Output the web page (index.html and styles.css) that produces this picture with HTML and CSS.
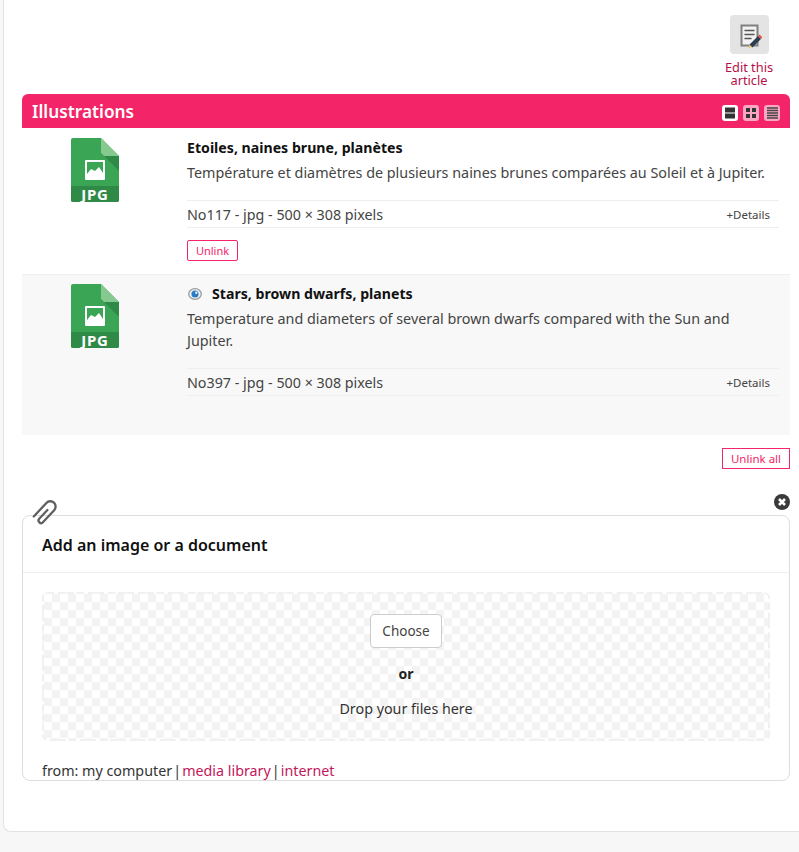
FILE: index.html
```html
<!DOCTYPE html>
<html lang="en">
<head>
<meta charset="utf-8">
<title>Illustrations</title>
<link rel="stylesheet" href="styles.css">
</head>
<body>
<main class="panel">
  <div class="edit-bar">
    <a class="edit-link">
      <span class="edit-icon">
        <svg width="26" height="26" viewBox="0 0 26 26">
          <rect x="5.500" y="3.500" width="16" height="20" fill="#f2f2f2" stroke="#808080" stroke-width="2"/>
          <path d="M8.500 8.500h10M8.500 12.500h10M8.500 16.500h7" stroke="#555" stroke-width="1.500"/>
          <path d="M15 24l8.500-8.500" stroke="#2c3e50" stroke-width="4"/>
          <path d="M23.500 15.500l1.500-1.500" stroke="#e2503f" stroke-width="4"/>
          <path d="M12.500 26l.8-3.600 2.800 2.800z" fill="#e8c56c"/>
        </svg>
      </span>
      <span class="edit-text">Edit this article</span>
    </a>
  </div>

  <section class="illustrations">
    <header class="ill-head">
      <h2 class="ill-title">Illustrations</h2>
      <div class="view-switch">
        <span class="view-btn view-on">
          <svg width="10" height="12" viewBox="0 0 10 12"><rect x="0" y="0.500" width="10" height="5" fill="#333"/><rect x="0" y="6.500" width="10" height="5" fill="#333"/></svg>
        </span>
        <span class="view-btn">
          <svg width="10" height="10" viewBox="0 0 10 10"><rect x="0" y="0" width="4" height="4" fill="#333"/><rect x="6" y="0" width="4" height="4" fill="#333"/><rect x="0" y="6" width="4" height="4" fill="#333"/><rect x="6" y="6" width="4" height="4" fill="#333"/></svg>
        </span>
        <span class="view-btn">
          <svg width="11" height="12" viewBox="0 0 11 12"><path d="M0 1h11M0 3.500h11M0 6h11M0 8.500h11M0 11h11" stroke="#444" stroke-width="1.300"/></svg>
        </span>
      </div>
    </header>

    <article class="item">
      <div class="item-icon">
        <svg class="jpg-icon" width="48" height="64" viewBox="0 0 48 64">
          <path d="M2 0h28l18 18v44a2 2 0 0 1-2 2H2a2 2 0 0 1-2-2V2a2 2 0 0 1 2-2z" fill="#3aa655"/>
          <path d="M30 0l18 18H33a3 3 0 0 1-3-3z" fill="#85c98f"/>
          <path d="M30 15l18 18V18H33a3 3 0 0 1-3-3z" fill="#2f8a47"/>
          <path d="M0 48h48v14a2 2 0 0 1-2 2H2a2 2 0 0 1-2-2z" fill="#2f8a47"/>
          <rect x="14" y="22" width="20" height="20" rx="1" fill="#fff"/>
          <path d="M16 24h16v11l-4-6-4 4-4-2-4 5z" fill="#3aa655"/>
          <text class="jpg-label" x="24" y="62" text-anchor="middle">JPG</text>
        </svg>
      </div>
      <div class="item-body">
        <h3 class="item-title">Etoiles, naines brune, planètes</h3>
        <p class="item-desc">Température et diamètres de plusieurs naines brunes comparées au Soleil et à Jupiter.</p>
        <div class="item-meta"><span>No117 - jpg - 500 × 308 pixels</span><span class="details">+Details</span></div>
        <button class="btn-unlink" type="button">Unlink</button>
      </div>
    </article>

    <article class="item item-alt">
      <div class="item-icon">
        <svg class="jpg-icon" width="48" height="64" viewBox="0 0 48 64">
          <path d="M2 0h28l18 18v44a2 2 0 0 1-2 2H2a2 2 0 0 1-2-2V2a2 2 0 0 1 2-2z" fill="#3aa655"/>
          <path d="M30 0l18 18H33a3 3 0 0 1-3-3z" fill="#85c98f"/>
          <path d="M30 15l18 18V18H33a3 3 0 0 1-3-3z" fill="#2f8a47"/>
          <path d="M0 48h48v14a2 2 0 0 1-2 2H2a2 2 0 0 1-2-2z" fill="#2f8a47"/>
          <rect x="14" y="22" width="20" height="20" rx="1" fill="#fff"/>
          <path d="M16 24h16v11l-4-6-4 4-4-2-4 5z" fill="#3aa655"/>
          <text class="jpg-label" x="24" y="62" text-anchor="middle">JPG</text>
        </svg>
      </div>
      <div class="item-body">
        <h3 class="item-title">
          <svg class="eye" width="16" height="14" viewBox="0 0 16 14"><ellipse cx="8" cy="7" rx="6.300" ry="5.300" fill="#eef3f7" stroke="#999" stroke-width="1.300"/><circle cx="8" cy="7" r="3.600" fill="#2c7cc4"/><circle cx="9.300" cy="5.800" r="1.200" fill="#e4f0fa"/></svg>
          <span>Stars, brown dwarfs, planets</span>
        </h3>
        <p class="item-desc">Temperature and diameters of several brown dwarfs compared with the Sun and Jupiter.</p>
        <div class="item-meta"><span>No397 - jpg - 500 × 308 pixels</span><span class="details">+Details</span></div>
      </div>
    </article>

    <div class="unlink-all-row"><button class="btn-unlink-all" type="button">Unlink all</button></div>
  </section>

  <section class="add-box">
    <svg class="clip" width="26" height="28" viewBox="-13 -14 26 28"><path d="M0.500 -4.500V7.500a2.500 2.500 0 0 0 5 0V-9a5.300 5.300 0 0 0-10.600 0V9.500" transform="rotate(43)" fill="none" stroke="#5f5f5f" stroke-width="2.300" stroke-linecap="round"/></svg>
    <svg class="close" width="16" height="16" viewBox="0 0 16 16"><circle cx="8" cy="8" r="8" fill="#3a3a3a"/><path d="M5 5l6 6M11 5l-6 6" stroke="#fff" stroke-width="2.600"/></svg>
    <h2 class="add-title">Add an image or a document</h2>
    <div class="add-main">
      <div class="dropzone">
        <button class="btn-choose" type="button">Choose</button>
        <strong class="or">or</strong>
        <span class="drop-text">Drop your files here</span>
      </div>
      <p class="from">from: my computer<span class="sep">|</span><a class="src">media library</a><span class="sep">|</span><a class="src">internet</a></p>
    </div>
  </section>
</main>
</body>
</html>
```
FILE: styles.css
```css
* { box-sizing: border-box; }
html, body { margin: 0; padding: 0; }
body {
  background: #f7f7f7;
  font-family: "Noto Sans", "Open Sans", sans-serif;
  color: #333;
  overflow: hidden;
  height: 852px;
}
.panel {
  margin-left: 3px;
  width: 830px;
  height: 832px;
  background: #fff;
  border: 1px solid #e2e2e2;
  border-top: 0;
  border-right: 0;
  border-radius: 0 0 0 8px;
  padding: 15px 43px 0 18px;
}
.edit-bar { display: flex; justify-content: flex-end; height: 79px; padding-right: 11px; }
.edit-link { width: 60px; display: flex; flex-direction: column; align-items: center; }
.edit-icon {
  width: 39px; height: 39px; background: #e4e4e4; border-radius: 4px;
  display: flex; align-items: center; justify-content: center;
}
.edit-text { font-size: 12.8px; line-height: 13px; color: #b4104a; text-align: center; margin-top: 7px; width: 60px; }
.ill-head {
  height: 34px; background: #f42468; border-radius: 6px 6px 0 0;
  display: flex; align-items: center; justify-content: space-between;
  padding: 0 10px;
}
.ill-title { margin: 0; padding-top: 1px; color: #fff; font-size: 17.3px; font-weight: 600; line-height: 34px; }
.view-switch { display: flex; gap: 5px; margin-top: 4px; }
.view-btn { width: 16px; height: 16px; background: #fba6c3; border-radius: 3px; display: flex; align-items: center; justify-content: center; }
.view-on { background: #fff; }
.item { display: grid; grid-template-columns: 146px 1fr; column-gap: 19px; padding: 10px 11px 0 0; height: 147px; border-bottom: 1px solid #eee; }
.item-alt { background: #f8f8f8; height: 160px; border-bottom: 0; padding-top: 9px; }
.item-icon { display: flex; justify-content: center; }
.jpg-icon { display: block; overflow: visible; }
.jpg-label { font-size: 15px; font-weight: 700; fill: #fff; letter-spacing: 0.8px; font-family: "Noto Sans", sans-serif; }
.item-title { margin: 0; font-size: 14.15px; line-height: 20px; font-weight: 700; color: #111; display: flex; align-items: center; }
.eye { margin-right: 9px; }
.item-desc { margin: 4px 0 0; padding-right: 10px; font-size: 14.35px; line-height: 22px; color: #444; }
.item-meta {
  margin-top: 16px; height: 28px; border-top: 1px solid #eee; border-bottom: 1px solid #eee;
  display: flex; justify-content: space-between; align-items: center;
  font-size: 14.3px; color: #444; padding-right: 9px;
}
.details { font-size: 11.5px; color: #444; }
.btn-unlink {
  display: block; margin-top: 12px; height: 21px; width: 51px; padding: 0; background: #fff;
  border: 1px solid #f42468; border-radius: 2px; color: #f42468; font: 11px "Noto Sans", sans-serif;
}
.unlink-all-row { display: flex; justify-content: flex-end; padding-top: 13px; height: 80px; }
.btn-unlink-all {
  height: 21px; width: 68px; padding: 0; background: #fff; border: 1px solid #f42468; color: #f42468;
  font: 11.5px "Noto Sans", sans-serif;
}
.add-box { position: relative; height: 266px; border: 1px solid #ddd; border-radius: 8px; }
.clip { position: absolute; left: 8px; top: -17px; }
.close { position: absolute; right: -1px; top: -22px; }
.add-title { margin: 0; height: 57px; padding: 0 19px; line-height: 58px; font-size: 16px; font-weight: 600; color: #111; border-bottom: 1px solid #eee; }
.add-main { padding: 19px 19px 0; }
.dropzone {
  height: 149px; border: 2px dashed #f0f0f0; border-radius: 6px;
  background-color: #fff;
  background-image: conic-gradient(#f3f3f3 25%, #fff 0 50%, #f3f3f3 0 75%, #fff 0);
  background-size: 16px 16px;
  display: flex; flex-direction: column; align-items: center; font-size: 14.3px; color: #333;
  padding-top: 20px;
}
.btn-choose {
  width: 72px; height: 34px; padding: 0; background: #fff; border: 1px solid #ccc; border-radius: 4px;
  font: 13.5px "Noto Sans", sans-serif; color: #444;
}
.or { margin-top: 16px; line-height: 20px; font-size: 14px; color: #222; }
.drop-text { margin-top: 15px; line-height: 20px; }
.from { margin: 20px 0 0; font-size: 14.3px; line-height: 20px; color: #333; }
.sep { display: inline-block; width: 10px; text-align: center; }
.src { color: #c2185b; }
```
